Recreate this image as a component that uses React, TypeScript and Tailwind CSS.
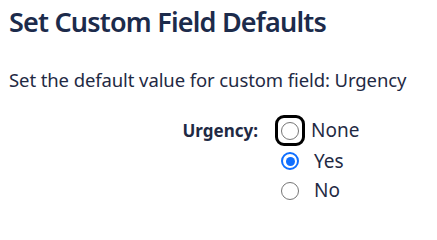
const Radio = ({ checked = false }: { checked?: boolean }) =>
  checked ? (
    <span className="flex h-[18px] w-[18px] items-center justify-center rounded-full border-[2px] border-[#0f6fff] bg-white">
      <span className="h-[9px] w-[9px] rounded-full bg-[#0f6fff]" />
    </span>
  ) : (
    <span className="block h-[18px] w-[18px] rounded-full border-[1.5px] border-[#767676] bg-white" />
  );

export default function App() {
  return (
    <div className="min-h-screen bg-white pl-[9px] pt-[4px] font-['Noto_Sans',sans-serif] text-[#1f2a44]">
      <h1 className="text-[27px] font-semibold leading-[36px] tracking-[-0.8px] text-[#1c2b4b]">
        Set Custom Field Defaults
      </h1>

      <p className="mt-[27px] text-[18.5px] leading-[26px] tracking-[-0.1px]">
        Set the default value for custom field: Urgency
      </p>

      <div className="mt-[22px] flex items-start">
        <div className="w-[249px] pt-[4px] text-right text-[17px] font-bold leading-[24px]">Urgency:</div>

        <div className="ml-[17px] flex flex-col text-[19px]">
          <label className="flex h-[31px] items-center">
            <span className="flex h-[31px] w-[30px] items-center justify-center rounded-[9px] border-[3px] border-black">
              <Radio />
            </span>
            <span className="ml-[6px]">None</span>
          </label>
          <label className="flex h-[30px] items-center pl-[6px]">
            <Radio checked />
            <span className="ml-[15px]">Yes</span>
          </label>
          <label className="flex h-[29px] items-center pl-[6px]">
            <Radio />
            <span className="ml-[15px]">No</span>
          </label>
        </div>
      </div>
    </div>
  );
}
